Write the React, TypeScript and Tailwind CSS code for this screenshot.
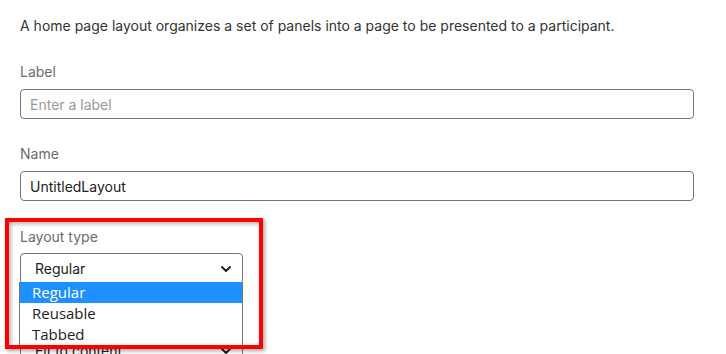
import React from "react";

function Chevron() {
  return (
    <svg width="12" height="8" viewBox="0 0 12 8" fill="none">
      <path d="M2 2 L6 6 L10 2" stroke="#222" strokeWidth="2" strokeLinecap="round" strokeLinejoin="round" />
    </svg>
  );
}

export default function App() {
  return (
    <div
      className="relative w-[726px] h-[354px] overflow-hidden bg-white"
      style={{ fontFamily: "Inter, 'Noto Sans', sans-serif" }}
    >
      <div className="pl-5 pr-8 pt-4">
        <p className="text-[14px] leading-5 text-[#333]">
          A home page layout organizes a set of panels into a page to be presented to a participant.
        </p>

        <div className="mt-[26px] flex flex-col">
          <label className="text-[14px] leading-5 text-[#6b6b6b]">Label</label>
          <div className="mt-[7px] h-[30px] w-[674px] rounded-[4px] border border-[#767676] flex items-center px-[9px] text-[14px] text-[#9a9a9a]">
            Enter a label
          </div>
        </div>

        <div className="mt-[25px] flex flex-col">
          <label className="text-[14px] leading-5 text-[#6b6b6b]">Name</label>
          <div className="mt-[7px] h-[30px] w-[674px] rounded-[4px] border border-[#767676] flex items-center px-[9px] text-[14px] text-[#222]">
            UntitledLayout
          </div>
        </div>

        <div className="mt-[26px] flex flex-col">
          <label className="text-[14px] leading-5 text-[#6b6b6b]">Layout type</label>
          <div className="mt-[6px] h-[31px] w-[223px] rounded-[4px] border border-[#767676] flex items-center justify-between pl-[14px] pr-[10px] text-[14px] text-[#222]">
            <span>Regular</span>
            <Chevron />
          </div>
        </div>

        <div className="mt-[25px] flex flex-col">
          <label className="text-[14px] leading-5 text-[#6b6b6b]">Layout</label>
          <div className="mt-[6px] h-[31px] w-[223px] rounded-[4px] border border-[#767676] flex items-center justify-between pl-[14px] pr-[10px] text-[14px] text-[#222]">
            <span>Fit to content</span>
            <Chevron />
          </div>
        </div>
      </div>

      {/* open dropdown list */}
      <div
        className="absolute left-[19px] top-[282px] w-[224px] h-[66px] bg-white border border-[#767676] border-t-0 text-[15px] text-[#222]"
        style={{ fontFamily: "'Open Sans', 'Noto Sans', sans-serif" }}
      >
        <div className="h-[21px] leading-[21px] pl-[12px] bg-[#1e90ff] text-white">Regular</div>
        <div className="h-[21px] leading-[21px] pl-[12px]">Reusable</div>
        <div className="h-[21px] leading-[21px] pl-[12px]">Tabbed</div>
      </div>

      {/* annotation highlight */}
      <div className="absolute left-[5px] top-[218px] w-[258px] h-[131px] border-4 border-[#ff0000] shadow-[2px_2px_4px_rgba(0,0,0,0.35),inset_2px_2px_4px_rgba(0,0,0,0.3)] pointer-events-none" />
    </div>
  );
}
